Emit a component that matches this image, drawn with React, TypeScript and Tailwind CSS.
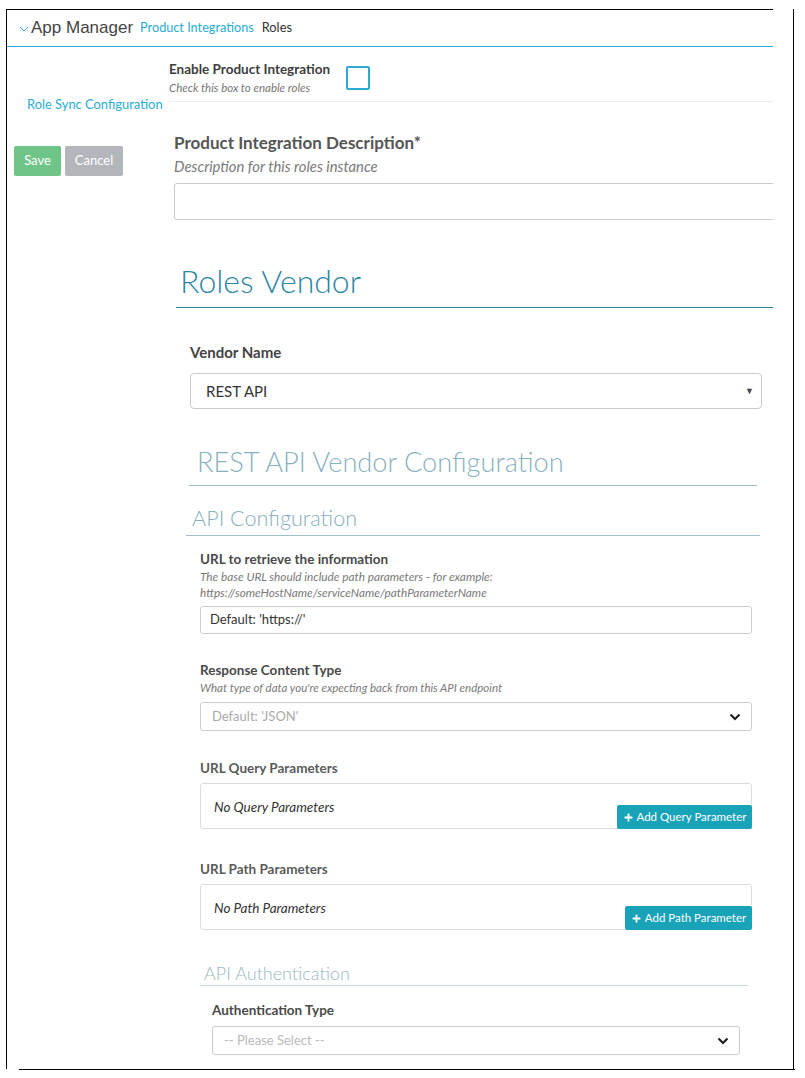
import React from 'react';
import { Plus } from 'lucide-react';

const font = { fontFamily: 'Lato, "Noto Sans", sans-serif' };

const ChevronDown: React.FC = () => (
  <svg width="12" height="8" viewBox="0 0 12 8" className="shrink-0">
    <path d="M1.5 1.5 L6 6 L10.5 1.5" fill="none" stroke="#222" strokeWidth="2.2" />
  </svg>
);

const Field: React.FC<{ label: string; help?: React.ReactNode; helpSize?: string; className?: string; children: React.ReactNode }> = ({ label, help, helpSize = 'text-[11.5px]', className, children }) => (
  <div className={className}>
    <p className="text-[13.5px] font-bold leading-[18px] text-[#4a4a4a]">{label}</p>
    {help && <div className={`mt-[1px] ${helpSize} italic leading-[16px] text-[#7a7a7a]`}>{help}</div>}
    {children}
  </div>
);

const ParamBox: React.FC<{ empty: string; button: string; width: string }> = ({ empty, button, width }) => (
  <div className="mt-[6px] h-[46px] flex justify-between rounded-[3px] border border-[#ddd]">
    <p className="pl-[13px] pt-[14px] text-[13.5px] italic leading-[18px] text-[#333]">{empty}</p>
    <button className={`self-end -mb-px -mr-px h-[24px] ${width} flex items-center justify-center gap-[3px] rounded-[2px] bg-[#19a3b8] text-[11.5px] text-white`}>
      <Plus size={11} strokeWidth={4} /> {button}
    </button>
  </div>
);

export default function App() {
  return (
    <div className="bg-white w-[805px] h-[1078px] pt-[9px]" style={font}>
      <div className="flex h-[1060px]">
        {/* framed content */}
        <div className="ml-[6px] w-[767px] border-l border-t border-black overflow-hidden">
          {/* header */}
          <div className="h-[37px] flex items-center pl-[12px] border-b border-[#2bb1d9]">
            <svg width="10" height="6" viewBox="0 0 10 6" className="mt-[2px] mr-[2px]">
              <path d="M1 1 L5 5 L9 1" fill="none" stroke="#38a9cf" strokeWidth="1" />
            </svg>
            <span className="text-[17px] text-[#444]" style={{ fontFamily: '"Liberation Sans", Arial, sans-serif' }}>App Manager</span>
            <span className="ml-[7px] text-[12.7px] text-[#29acd7]">Product Integrations</span>
            <span className="ml-[8px] text-[12.8px] text-[#333]">Roles</span>
          </div>

          <div className="flex">
            {/* sidebar */}
            <div className="w-[162px] shrink-0">
              <p className="pl-[20px] pt-[49px] text-[12.9px] leading-[17px] text-[#29acd7] whitespace-nowrap">Role Sync Configuration</p>
              <div className="mt-[33px] pl-[7px] flex gap-[4px]">
                <button className="h-[30px] w-[47px] rounded-[2px] bg-[#6fc587] text-[13px] text-white">Save</button>
                <button className="h-[30px] w-[58px] rounded-[2px] bg-[#b3b6ba] text-[13px] text-white">Cancel</button>
              </div>
            </div>

            {/* main */}
            <div className="flex-1 min-w-0">
              <div className="pt-[13px] pb-[6px] flex items-center border-b border-[#ececec]">
                <div>
                  <p className="text-[13.5px] font-bold leading-[18px] text-[#3d3d3d]">Enable Product Integration</p>
                  <p className="mt-[2px] text-[11.5px] italic leading-[15px] text-[#777]">Check this box to enable roles</p>
                </div>
                <div className="ml-[16px] h-[24px] w-[24px] rounded-[2px] border-2 border-[#2eaad6]" />
              </div>

              <div className="ml-[5px] mt-[30px]">
                <p className="text-[17px] font-bold leading-[22px] text-[#555]">Product Integration Description*</p>
                <p className="mt-[2px] text-[14.8px] italic leading-[20px] text-[#7a7a7a]">Description for this roles instance</p>
                <div className="mt-[7px] h-[37px] -mr-[20px] rounded-[3px] border border-[#ccc]" />
              </div>

              <div className="ml-[7px] mt-[41px] pb-[6px] border-b border-[#2e7f9c]">
                <h1 className="pl-[4px] text-[32px] font-light leading-[40px] text-[#2b87a8]">Roles Vendor</h1>
              </div>

              <div className="ml-[21px] mr-[11px] mt-[34px]">
                <p className="text-[15px] font-bold leading-[20px] text-[#444]">Vendor Name</p>
                <div className="mt-[11px] h-[36px] flex items-center justify-between rounded-[4px] border border-[#ccc] pl-[15px] pr-[7px]">
                  <span className="text-[15px] text-[#333]">REST API</span>
                  <span className="text-[9px] text-[#444]">▼</span>
                </div>
              </div>

              <div className="ml-[20px] mr-[16px] mt-[36px] pb-[6px] border-b border-[#9fbfca]">
                <h2 className="pl-[8px] text-[27.2px] font-light leading-[34px] text-[#89b2c0]">REST API Vendor Configuration</h2>
              </div>

              <div className="ml-[17px] mr-[13px] mt-[18px] pb-[3px] border-b border-[#9fbfca]">
                <h3 className="pl-[6px] text-[21.6px] font-light leading-[28px] text-[#86afbd]">API Configuration</h3>
              </div>

              <Field
                className="ml-[31px] mr-[21px] mt-[14px]"
                label="URL to retrieve the information"
                helpSize="text-[11.8px]"
                help={<>The base URL should include path parameters - for example:<br />https://someHostName/serviceName/pathParameterName</>}
              >
                <div className="mt-[5px] h-[28px] flex items-center rounded-[3px] border border-[#ccc] pl-[9px] text-[13px] text-[#333]">Default: 'https://'</div>
              </Field>

              <Field
                className="ml-[31px] mr-[21px] mt-[27px]"
                label="Response Content Type"
                help="What type of data you're expecting back from this API endpoint"
              >
                <div className="mt-[6px] h-[29px] flex items-center justify-between rounded-[3px] border border-[#ccc] pl-[11px] pr-[10px]">
                  <span className="text-[13px] text-[#aaa]">Default: 'JSON'</span>
                  <ChevronDown />
                </div>
              </Field>

              <div className="ml-[31px] mr-[21px] mt-[28px]">
                <p className="text-[13.5px] font-bold leading-[18px] text-[#5a5a5a]">URL Query Parameters</p>
                <ParamBox empty="No Query Parameters" button="Add Query Parameter" width="w-[135px]" />
              </div>

              <div className="ml-[31px] mr-[21px] mt-[31px]">
                <p className="text-[13.5px] font-bold leading-[18px] text-[#5a5a5a]">URL Path Parameters</p>
                <ParamBox empty="No Path Parameters" button="Add Path Parameter" width="w-[127px]" />
              </div>

              <div className="ml-[31px] mr-[25px] mt-[32px] pb-[1px] border-b border-[#c9dce2]">
                <h4 className="pl-[4px] text-[18px] font-light leading-[22px] text-[#9ab7c2]">API Authentication</h4>
              </div>

              <Field className="ml-[43px] mr-[33px] mt-[15px]" label="Authentication Type">
                <div className="mt-[7px] h-[29px] flex items-center justify-between rounded-[3px] border border-[#ccc] pl-[11px] pr-[10px]">
                  <span className="text-[13px] text-[#bbb]">-- Please Select --</span>
                  <ChevronDown />
                </div>
              </Field>
            </div>
          </div>
        </div>
        <div className="ml-[20px] w-px bg-black" />
      </div>
      <div className="ml-[19px] w-[776px] h-px bg-black" />
    </div>
  );
}
